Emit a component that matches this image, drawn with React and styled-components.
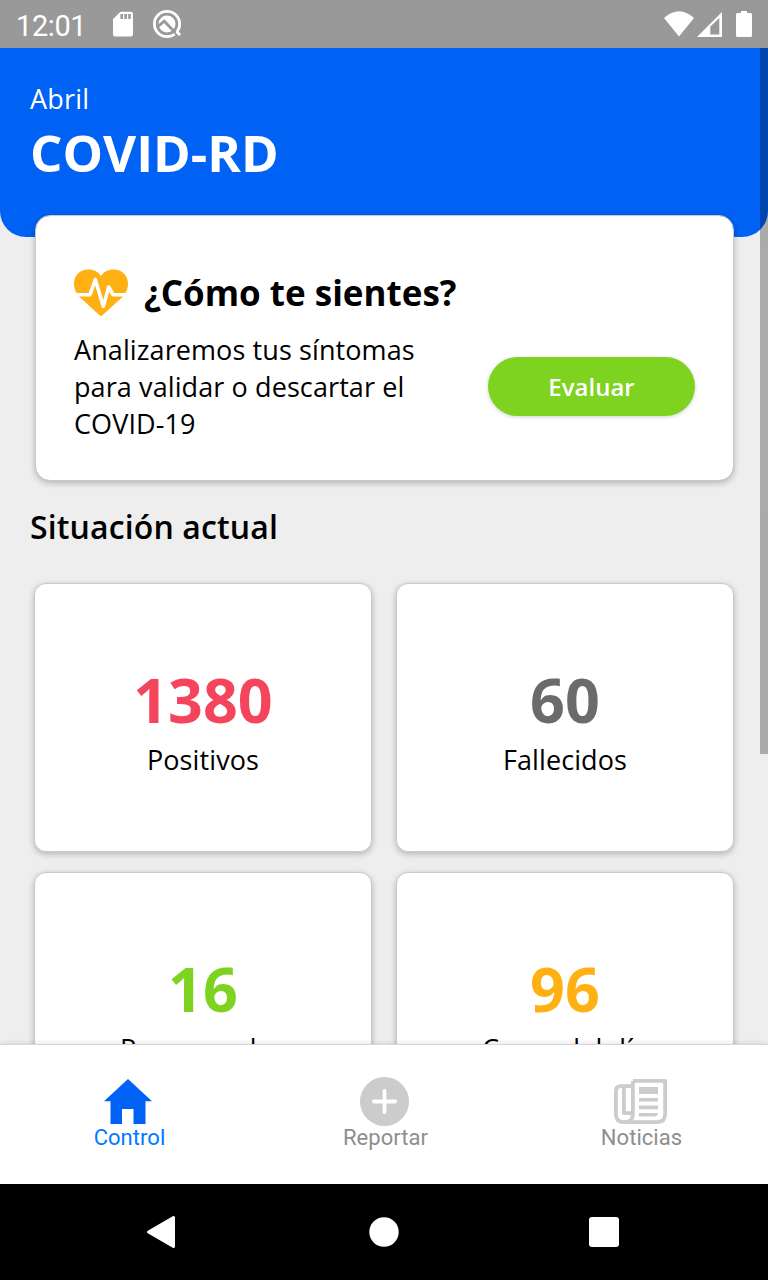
import React from "react";
import styled, { createGlobalStyle } from "styled-components";

const GlobalStyle = createGlobalStyle`
  * { box-sizing: border-box; }
  body { margin: 0; background: #eeeeee; font-family: "Open Sans", "Liberation Sans", sans-serif; color: #000; }
  h1, h2, h3, p { margin: 0; }
`;

const Screen = styled.div`
  width: 768px;
  height: 1280px;
  display: flex;
  flex-direction: column;
  overflow: hidden;
`;

const StatusBar = styled.div`
  flex: none;
  height: 48px;
  padding: 0 16px;
  display: flex;
  align-items: center;
  background: #999999;
  color: #fff;
`;

const Clock = styled.span`
  width: 96px;
  font: 400 29px/48px Roboto, sans-serif;
  letter-spacing: -0.4px;
  padding-top: 3px;
`;

const StatusIcons = styled.div`
  display: flex;
  align-items: center;
  margin-left: ${(p) => (p.$end ? "auto" : 0)};
  padding-bottom: ${(p) => (p.$end ? 0 : "1px")};
`;

const Icon = styled.svg`
  display: block;
  flex: none;
`;

const Scroller = styled.main`
  flex: 1;
  min-height: 0;
  overflow: hidden;
  position: relative;
`;

const ScrollThumb = styled.div`
  position: absolute;
  top: 0;
  right: 0;
  width: 8px;
  height: 706px;
  background: rgba(0, 0, 0, 0.28);
`;

const Header = styled.header`
  height: 189px;
  padding: 33px 30px 0;
  border-radius: 0 0 26px 26px;
  background: #0062f5;
  color: #fff;
`;

const Month = styled.p`
  font-size: 27px;
  line-height: 36px;
  letter-spacing: 0.2px;
`;

const AppTitle = styled.h1`
  font-size: 51px;
  line-height: 70px;
  font-weight: 700;
`;

const CheckCard = styled.section`
  height: 266px;
  margin: -22px 34px 0 35px;
  padding: 47px 38px 0;
  border: 1px solid #cacaca;
  border-radius: 15px;
  background: #fff;
  background-clip: padding-box;
  box-shadow: 0 2px 6px rgba(0, 0, 0, 0.25);
`;

const CheckHeading = styled.div`
  display: flex;
  align-items: center;
  gap: 16px;
  height: 60px;
`;

const CheckTitle = styled.h2`
  font-size: 35px;
  line-height: 50px;
  font-weight: 700;
`;

const CheckBody = styled.div`
  display: flex;
  justify-content: space-between;
  align-items: center;
  padding-top: 8px;
`;

const CheckText = styled.p`
  width: 370px;
  font-size: 27px;
  line-height: 37px;
  letter-spacing: 0.1px;
`;

const EvaluateButton = styled.button`
  width: 207px;
  height: 59px;
  border: 0;
  border-radius: 30px;
  background: #7ed321;
  color: #fff;
  font: 600 24px/60px "Open Sans", sans-serif;
  padding: 0;
  box-shadow: 0 1px 4px rgba(0, 0, 0, 0.18);
`;

const SectionTitle = styled.h2`
  padding: 24px 30px 0;
  font-size: 32px;
  line-height: 44px;
  font-weight: 600;
  letter-spacing: 0.13px;
`;

const StatGrid = styled.section`
  display: grid;
  grid-template-columns: 338px 338px;
  grid-auto-rows: 269px;
  gap: 20px 24px;
  padding: 34px 34px 0;
`;

const StatCard = styled.article`
  display: flex;
  flex-direction: column;
  align-items: center;
  padding-top: 75px;
  border: 1px solid #cacaca;
  border-radius: 12px;
  background: #fff;
  box-shadow: 0 2px 6px rgba(0, 0, 0, 0.25);
`;

const StatValue = styled.strong`
  font-size: 61px;
  line-height: 82px;
  font-weight: 700;
  color: ${(p) => p.$color};
`;

const StatLabel = styled.span`
  font-size: 27px;
  line-height: 37px;
  letter-spacing: 0.1px;
`;

const TabBar = styled.nav`
  flex: none;
  height: 140px;
  display: grid;
  grid-template-columns: repeat(3, 1fr);
  border-top: 1px solid #d9d9d9;
  background: #fff;
  box-shadow: 0 -1px 5px rgba(0, 0, 0, 0.1);
  position: relative;
`;

const Tab = styled.a`
  display: flex;
  flex-direction: column;
  align-items: center;
  padding-top: 32px;
  color: ${(p) => (p.$active ? "#007aff" : "#8e8e8e")};
`;

const TabLabel = styled.span`
  padding-left: 3px;
  font: 400 22px/24px Roboto, sans-serif;
  letter-spacing: 0.05px;
`;

const TabIcon = styled.span`
  display: flex;
  align-items: center;
  height: 49px;
`;

const SystemNav = styled.footer`
  flex: none;
  height: 96px;
  padding: 0 148px 0 146px;
  display: grid;
  grid-template-columns: 32px 1fr 32px;
  align-items: center;
  background: #000;
`;

const HomeButton = styled.span`
  display: flex;
  justify-content: center;
  padding-left: 2px;
`;

const stats = [
  { value: "1380", label: "Positivos", color: "#f5455c" },
  { value: "60", label: "Fallecidos", color: "#6b6b6b" },
  { value: "16", label: "Recuperados", color: "#7ed321" },
  { value: "96", label: "Casos del día", color: "#ffb114" },
];

const HeartIcon = () => (
  <Icon width="54" height="48" viewBox="0 0 54 48">
    <path fill="#ffb114" d="M27 7C30 2.500 34.500.500 39.500.500C48 .500 54 6.500 54 14.500C54 20 52 24 49 27.500L28.500 46.300Q27 47.700 25.500 46.300L5 27.500C2 24 0 20 0 14.500C0 6.500 6 .500 14.500.500C19.500.500 24 2.500 27 7Z" />
    <path fill="none" stroke="#fff" strokeWidth="3.600" strokeLinejoin="round" d="M1 25.700H16L21.300 10.500L29.300 37.300L34.700 18L39 25.700H53" />
  </Icon>
);

const HomeIcon = () => (
  <Icon width="48" height="45" viewBox="0 0 48 45">
    <path fill="#0062f5" d="M24 0L48 22.300H41.500V45H29.500V30H18V45H6.500V22.300H0Z" />
  </Icon>
);

const PlusIcon = () => (
  <Icon width="49" height="49" viewBox="0 0 49 49">
    <circle cx="24.500" cy="24.500" r="24.500" fill="#cccccc" />
    <path d="M24.500 13.900V35.100M13.900 24.500H35.100" stroke="#fff" strokeWidth="3.800" strokeLinecap="round" />
  </Icon>
);

const NewsIcon = () => (
  <Icon width="53" height="45" viewBox="0 0 53 45">
    <g fill="none" stroke="#cccccc" strokeWidth="3.800" strokeLinejoin="round">
      <path d="M18.900 1.900H51.100V35Q51.100 43.100 43 43.100H10Q1.900 43.100 1.900 35V12Q1.900 7.200 7 7.200H18.900" />
      <path d="M18.900 1.900V35Q18.900 43.100 10.500 43.100" />
      <path d="M9.900 8V34.200H18" />
    </g>
    <path fill="#cccccc" d="M25 8H44V15H25ZM25 19H44V22.500H25ZM25 26.500H44V30.200H25ZM25 34H44Q43.500 37.500 40 37.500H25Z" />
  </Icon>
);

const tabs = [
  { label: "Control", icon: HomeIcon, active: true },
  { label: "Reportar", icon: PlusIcon },
  { label: "Noticias", icon: NewsIcon },
];

export default function App() {
  return (
    <Screen>
      <GlobalStyle />
      <StatusBar>
        <Clock>12:01</Clock>
        <StatusIcons>
          <Icon width="72" height="30" viewBox="0 0 72 30">
            <path fill="#fff" fillRule="evenodd" d="M8.500 2.700H19Q21 2.700 21 4.700V25.500Q21 27.500 19 27.500H3Q1 27.500 1 25.500V10ZM8.400 5V10H11V5ZM12.300 5V10H14.900V5ZM16.200 5V10H18.800V5Z" />
            <circle cx="55" cy="15" r="12.600" fill="none" stroke="#fff" strokeWidth="2.800" />
            <circle cx="55" cy="15" r="8.500" fill="#fff" />
            <path fill="none" stroke="#999" strokeWidth="2.800" d="M46 17.300L52.300 12.200L66 26.500" />
            <path fill="none" stroke="#fff" strokeWidth="2.800" d="M64.500 22.500L68 26" />
          </Icon>
        </StatusIcons>
        <StatusIcons $end>
          <Icon width="88" height="30" viewBox="0 0 88 30">
            <path fill="#fff" d="M0 9Q15-4.500 30 9L15 27.500Z" />
            <path fill="#fff" fillRule="evenodd" d="M33 28L58 3V28ZM46.300 17.500V25.500H55.300V9Z" />
            <path fill="#fff" d="M77 2H83V4H86.500Q88 4 88 5.500V26.500Q88 28 86.500 28H73.500Q72 28 72 26.500V5.500Q72 4 73.500 4H77Z" />
          </Icon>
        </StatusIcons>
      </StatusBar>

      <Scroller>
        <Header>
          <Month>Abril</Month>
          <AppTitle>COVID-RD</AppTitle>
        </Header>
        <CheckCard>
          <CheckHeading>
            <HeartIcon />
            <CheckTitle>¿Cómo te sientes?</CheckTitle>
          </CheckHeading>
          <CheckBody>
            <CheckText>Analizaremos tus síntomas para validar o descartar el COVID-19</CheckText>
            <EvaluateButton>Evaluar</EvaluateButton>
          </CheckBody>
        </CheckCard>
        <SectionTitle>Situación actual</SectionTitle>
        <StatGrid>
          {stats.map((s) => (
            <StatCard key={s.label}>
              <StatValue $color={s.color}>{s.value}</StatValue>
              <StatLabel>{s.label}</StatLabel>
            </StatCard>
          ))}
        </StatGrid>
        <ScrollThumb />
      </Scroller>

      <TabBar>
        {tabs.map(({ label, icon: Glyph, active }) => (
          <Tab key={label} $active={active}>
            <TabIcon><Glyph /></TabIcon>
            <TabLabel>{label}</TabLabel>
          </Tab>
        ))}
      </TabBar>

      <SystemNav>
        <Icon width="32" height="34" viewBox="0 0 32 34">
          <path fill="#fff" stroke="#fff" strokeWidth="3" strokeLinejoin="round" d="M27.500 2.500V31.500L2.500 17Z" />
        </Icon>
        <HomeButton>
          <Icon width="30" height="30" viewBox="0 0 30 30">
            <circle cx="15" cy="15" r="14.700" fill="#fff" />
          </Icon>
        </HomeButton>
        <Icon width="32" height="32" viewBox="0 0 32 32">
          <rect x="1" y="1" width="30" height="30" rx="3" fill="#fff" />
        </Icon>
      </SystemNav>
    </Screen>
  );
}
